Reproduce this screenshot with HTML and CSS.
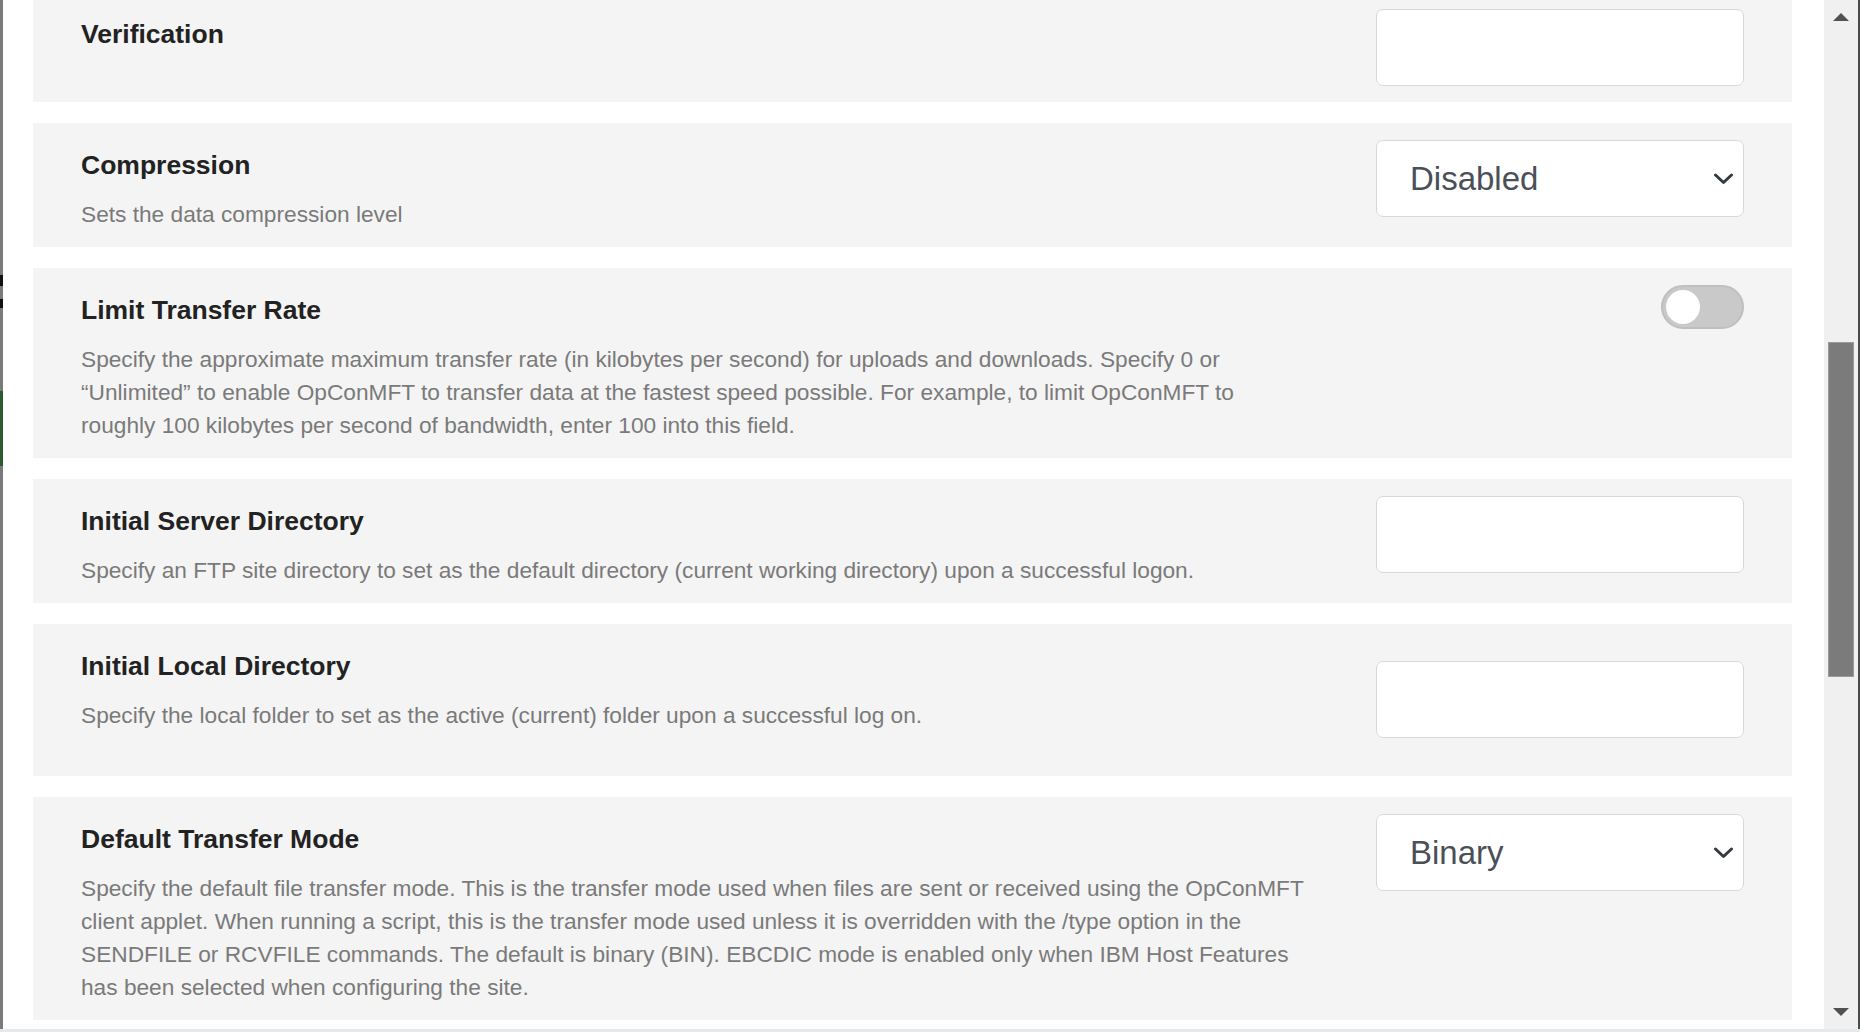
FILE: index.html
```html
<!DOCTYPE html>
<html lang="en">
<head>
<meta charset="utf-8">
<title>Site settings</title>
<link rel="stylesheet" href="styles.css">
</head>
<body>
<div class="window">
  <div class="edge"></div>
  <main class="content">
    <div class="list">
      <section class="card">
        <div class="text">
          <h3 class="title">Verification</h3>
        </div>
        <div class="control field"></div>
      </section>

      <section class="card">
        <div class="text">
          <h3 class="title">Compression</h3>
          <p class="desc">Sets the data compression level</p>
        </div>
        <div class="control field select">
          <span>Disabled</span>
          <svg class="chev" width="21" height="12" viewBox="0 0 21 12"><polyline points="2.5,2 10.5,9.5 18.5,2" fill="none" stroke="#343a40" stroke-width="3" stroke-linecap="round" stroke-linejoin="round"/></svg>
        </div>
      </section>

      <section class="card">
        <div class="text">
          <h3 class="title">Limit Transfer Rate</h3>
          <p class="desc">Specify the approximate maximum transfer rate (in kilobytes per second) for uploads and downloads. Specify 0 or “Unlimited” to enable OpConMFT to transfer data at the fastest speed possible. For example, to limit OpConMFT to roughly 100 kilobytes per second of bandwidth, enter 100 into this field.</p>
        </div>
        <div class="control toggle-wrap">
          <span class="toggle"><span class="knob"></span></span>
        </div>
      </section>

      <section class="card">
        <div class="text">
          <h3 class="title">Initial Server Directory</h3>
          <p class="desc">Specify an FTP site directory to set as the default directory (current working directory) upon a successful logon.</p>
        </div>
        <div class="control field"></div>
      </section>

      <section class="card">
        <div class="text">
          <h3 class="title">Initial Local Directory</h3>
          <p class="desc">Specify the local folder to set as the active (current) folder upon a successful log on.</p>
        </div>
        <div class="control field lowered"></div>
      </section>

      <section class="card">
        <div class="text">
          <h3 class="title">Default Transfer Mode</h3>
          <p class="desc">Specify the default file transfer mode. This is the transfer mode used when files are sent or received using the OpConMFT client applet. When running a script, this is the transfer mode used unless it is overridden with the /type option in the SENDFILE or RCVFILE commands. The default is binary (BIN). EBCDIC mode is enabled only when IBM Host Features has been selected when configuring the site.</p>
        </div>
        <div class="control field select">
          <span>Binary</span>
          <svg class="chev" width="21" height="12" viewBox="0 0 21 12"><polyline points="2.5,2 10.5,9.5 18.5,2" fill="none" stroke="#343a40" stroke-width="3" stroke-linecap="round" stroke-linejoin="round"/></svg>
        </div>
      </section>
    </div>
  </main>
  <div class="scrollbar">
    <div class="sb-btn"><span class="tri up"></span></div>
    <div class="track"><div class="thumb"></div></div>
    <div class="sb-btn"><span class="tri down"></span></div>
  </div>
</div>
<div class="statusline"></div>
</body>
</html>
```

FILE: styles.css
```css
html, body {
  margin: 0;
  padding: 0;
  background: #ffffff;
  overflow: hidden;
}

body {
  width: 1860px;
  height: 1032px;
  font-family: "Liberation Sans", Arial, sans-serif;
}

.window {
  display: flex;
  height: 1029px;
}

.edge {
  width: 3px;
  flex-shrink: 0;
  background: linear-gradient(to bottom,
    #7a7a7a 0, #7a7a7a 275px,
    #111 275px, #111 286px,
    #7a7a7a 286px, #7a7a7a 299px,
    #111 299px, #111 308px,
    #7a7a7a 308px, #7a7a7a 391px,
    #2e5a30 391px, #2e5a30 466px,
    #7a7a7a 466px);
}

.content {
  flex: 1;
  overflow: hidden;
  padding: 0 32px 0 30px;
}

.list {
  display: flex;
  flex-direction: column;
  gap: 21px;
  margin-top: -8px;
}

.card {
  display: flex;
  align-items: flex-start;
  gap: 64px;
  background: #f4f4f4;
  padding: 17px 48px 16px 48px;
}

.text {
  flex: 1;
  padding-top: 10px;
}

.title {
  margin: 0;
  font-size: 26.5px;
  line-height: 31px;
  font-weight: 700;
  color: #222222;
}

.desc {
  margin: 17px 0 0 0;
  font-size: 22.7px;
  line-height: 33px;
  color: #7a7a7a;
}

.control {
  width: 368px;
  height: 77px;
  flex-shrink: 0;
  box-sizing: border-box;
}

.field {
  background: #ffffff;
  border: 1.5px solid #d5d9de;
  border-radius: 7px;
}

.field.lowered {
  margin: 20px 0 22px 0;
}

.select {
  display: flex;
  align-items: center;
  justify-content: space-between;
  padding: 0 9px 0 33px;
  font-size: 33px;
  color: #4a5057;
}

.toggle-wrap {
  display: flex;
  justify-content: flex-end;
  align-items: flex-start;
  height: 44px;
}

.toggle {
  width: 83px;
  height: 44px;
  box-sizing: border-box;
  border-radius: 22px;
  background: #c9c9c9;
  border: 2px solid #bfbfbf;
  display: flex;
  align-items: center;
  padding-left: 3px;
}

.knob {
  width: 34px;
  height: 34px;
  border-radius: 50%;
  background: #ffffff;
}

.scrollbar {
  width: 34px;
  flex-shrink: 0;
  background: #f0f0f0;
  border-right: 2px solid #4a4a4a;
  display: flex;
  flex-direction: column;
}

.sb-btn {
  height: 34px;
  display: flex;
  align-items: center;
  justify-content: center;
}

.tri {
  width: 0;
  height: 0;
  border-left: 8px solid transparent;
  border-right: 8px solid transparent;
}

.tri.up {
  border-bottom: 8px solid #505050;
}

.tri.down {
  border-top: 8px solid #505050;
}

.track {
  flex: 1;
  padding: 308px 4px 0 4px;
}

.thumb {
  height: 335px;
  background: #7b7b7b;
  border: 1px solid #9a9a9a;
  box-sizing: border-box;
}

.statusline {
  height: 3px;
  background: #e6e8ec;
}
```
